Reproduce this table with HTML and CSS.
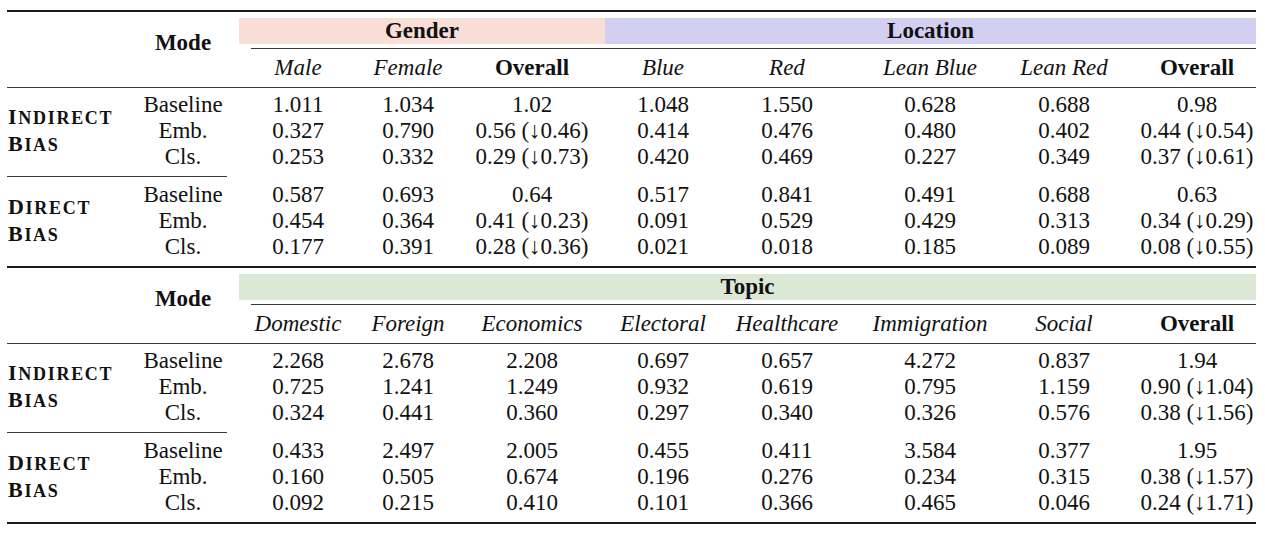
FILE: index.html
```html
<!DOCTYPE html>
<html lang="en">
<head>
<meta charset="utf-8">
<title>Bias table</title>
<link rel="stylesheet" href="styles.css">
</head>
<body>
<div class="page">

  <section class="panel">
    <div class="head cols">
      <div class="mode-head">Mode</div>
      <div class="band gender">Gender</div>
      <div class="band location">Location</div>
      <div class="cmid"></div>
      <div class="sub c3">Male</div>
      <div class="sub c4">Female</div>
      <div class="sub c5 overall">Overall</div>
      <div class="sub c6">Blue</div>
      <div class="sub c7">Red</div>
      <div class="sub c8">Lean Blue</div>
      <div class="sub c9">Lean Red</div>
      <div class="sub c10 overall last">Overall</div>
    </div>

    <div class="group cols first">
      <div class="label"><span class="ln">I<span class="sc">ndirect</span></span><span class="ln">B<span class="sc">ias</span></span></div>
      <div class="m">Baseline</div><div>1.011</div><div>1.034</div><div>1.02</div><div>1.048</div><div>1.550</div><div>0.628</div><div>0.688</div><div class="last">0.98</div>
      <div class="m">Emb.</div><div>0.327</div><div>0.790</div><div>0.56 (↓0.46)</div><div>0.414</div><div>0.476</div><div>0.480</div><div>0.402</div><div class="last">0.44 (↓0.54)</div>
      <div class="m">Cls.</div><div>0.253</div><div>0.332</div><div>0.29 (↓0.73)</div><div>0.420</div><div>0.469</div><div>0.227</div><div>0.349</div><div class="last">0.37 (↓0.61)</div>
    </div>
    <div class="part-rule"></div>
    <div class="group cols second">
      <div class="label"><span class="ln">D<span class="sc">irect</span></span><span class="ln">B<span class="sc">ias</span></span></div>
      <div class="m">Baseline</div><div>0.587</div><div>0.693</div><div>0.64</div><div>0.517</div><div>0.841</div><div>0.491</div><div>0.688</div><div class="last">0.63</div>
      <div class="m">Emb.</div><div>0.454</div><div>0.364</div><div>0.41 (↓0.23)</div><div>0.091</div><div>0.529</div><div>0.429</div><div>0.313</div><div class="last">0.34 (↓0.29)</div>
      <div class="m">Cls.</div><div>0.177</div><div>0.391</div><div>0.28 (↓0.36)</div><div>0.021</div><div>0.018</div><div>0.185</div><div>0.089</div><div class="last">0.08 (↓0.55)</div>
    </div>
  </section>

  <section class="panel final">
    <div class="head cols">
      <div class="mode-head">Mode</div>
      <div class="band topic">Topic</div>
      <div class="cmid"></div>
      <div class="sub c3">Domestic</div>
      <div class="sub c4">Foreign</div>
      <div class="sub c5">Economics</div>
      <div class="sub c6">Electoral</div>
      <div class="sub c7">Healthcare</div>
      <div class="sub c8">Immigration</div>
      <div class="sub c9">Social</div>
      <div class="sub c10 overall last">Overall</div>
    </div>

    <div class="group cols first">
      <div class="label"><span class="ln">I<span class="sc">ndirect</span></span><span class="ln">B<span class="sc">ias</span></span></div>
      <div class="m">Baseline</div><div>2.268</div><div>2.678</div><div>2.208</div><div>0.697</div><div>0.657</div><div>4.272</div><div>0.837</div><div class="last">1.94</div>
      <div class="m">Emb.</div><div>0.725</div><div>1.241</div><div>1.249</div><div>0.932</div><div>0.619</div><div>0.795</div><div>1.159</div><div class="last">0.90 (↓1.04)</div>
      <div class="m">Cls.</div><div>0.324</div><div>0.441</div><div>0.360</div><div>0.297</div><div>0.340</div><div>0.326</div><div>0.576</div><div class="last">0.38 (↓1.56)</div>
    </div>
    <div class="part-rule"></div>
    <div class="group cols second">
      <div class="label"><span class="ln">D<span class="sc">irect</span></span><span class="ln">B<span class="sc">ias</span></span></div>
      <div class="m">Baseline</div><div>0.433</div><div>2.497</div><div>2.005</div><div>0.455</div><div>0.411</div><div>3.584</div><div>0.377</div><div class="last">1.95</div>
      <div class="m">Emb.</div><div>0.160</div><div>0.505</div><div>0.674</div><div>0.196</div><div>0.276</div><div>0.234</div><div>0.315</div><div class="last">0.38 (↓1.57)</div>
      <div class="m">Cls.</div><div>0.092</div><div>0.215</div><div>0.410</div><div>0.101</div><div>0.366</div><div>0.465</div><div>0.046</div><div class="last">0.24 (↓1.71)</div>
    </div>
  </section>

</div>
</body>
</html>
```

FILE: styles.css
```css
html, body {
  margin: 0;
  padding: 0;
  background: #ffffff;
}

body {
  font-family: "Liberation Serif", "Times New Roman", serif;
  color: #111111;
}

.page {
  padding: 10px 0 0 7px;
  width: 1249px;
}

.panel {
  border-top: 2px solid #1a1a1a;
}

.panel.final {
  border-bottom: 2px solid #1a1a1a;
}

.cols {
  display: grid;
  grid-template-columns: 120px 112px 118px 102px 146px 116px 132px 154px 114px 135px;
}

.head {
  padding-top: 6px;
  grid-template-rows: 26px auto 38px;
  border-bottom: 1px solid #3a3a3a;
}

.mode-head {
  grid-column: 2;
  grid-row: 1 / 4;
  align-self: start;
  margin-top: 12px;
  font-weight: bold;
  font-size: 23px;
  line-height: 26px;
  text-align: center;
}

.band {
  grid-row: 1;
  font-weight: bold;
  font-size: 23px;
  line-height: 26px;
  text-align: center;
}

.band.gender {
  grid-column: 3 / 6;
  background: #f9ddd7;
}

.band.location {
  grid-column: 6 / 11;
  background: #d2cff1;
}

.band.topic {
  grid-column: 3 / 11;
  background: #dbe8d6;
}

.cmid {
  grid-row: 2;
  grid-column: 3 / 11;
  margin: 4px 0 0 12px;
  height: 1px;
  background: #3a3a3a;
}

.sub {
  grid-row: 3;
  font-style: italic;
  font-size: 23px;
  line-height: 38px;
  text-align: center;
  white-space: nowrap;
}

.c3 { grid-column: 3; }
.c4 { grid-column: 4; }
.c5 { grid-column: 5; }
.c6 { grid-column: 6; }
.c7 { grid-column: 7; }
.c8 { grid-column: 8; }
.c9 { grid-column: 9; }
.c10 { grid-column: 10; }

.sub.overall {
  font-style: normal;
  font-weight: bold;
}

.group {
  grid-auto-rows: 26px;
  font-size: 23px;
  line-height: 26px;
  text-align: center;
}

.group.first {
  padding: 4px 0 6px;
}

.group.second {
  padding: 5px 0 6px;
}

.group > div {
  white-space: nowrap;
}

.group .m {
  grid-column: 2;
}

.last {
  padding-left: 17px;
}

.label {
  grid-column: 1;
  grid-row: 1 / 4;
  align-self: center;
  display: flex;
  flex-direction: column;
  text-align: left;
  padding-left: 1px;
  font-weight: bold;
  font-size: 22px;
  line-height: 26px;
  letter-spacing: 1.7px;
}

.sc {
  text-transform: uppercase;
  font-size: 0.82em;
}

.part-rule {
  width: 220px;
  height: 1px;
  background: #3a3a3a;
}
```
